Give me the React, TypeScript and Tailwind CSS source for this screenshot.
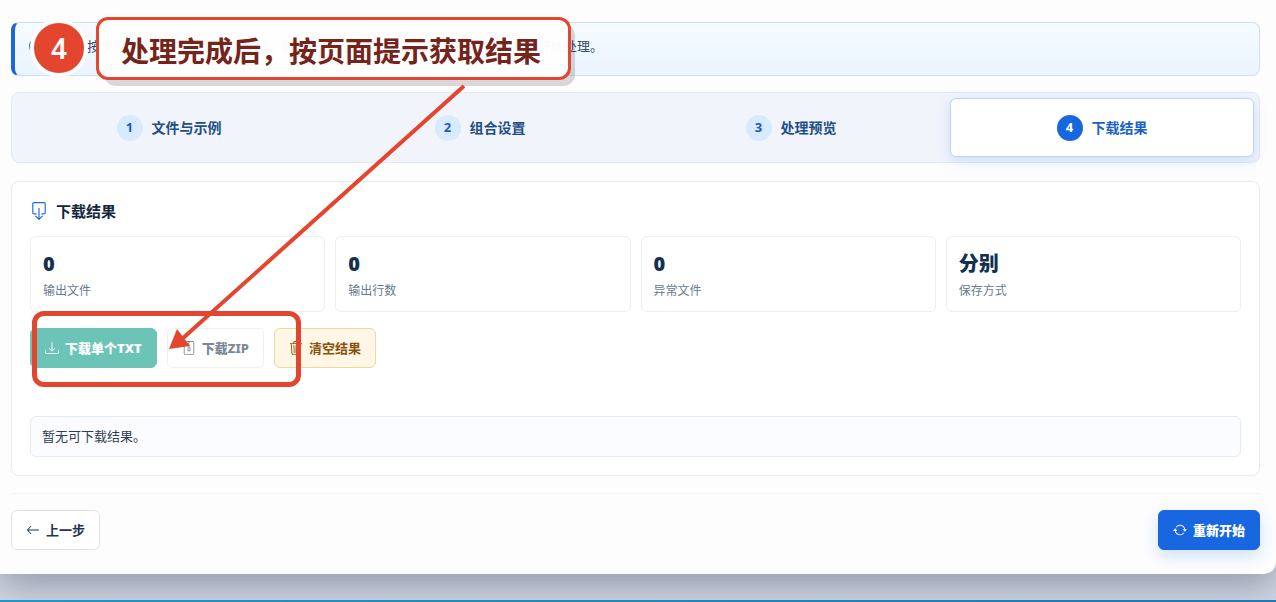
import type { ReactNode } from 'react';
import { BsArrowLeft, BsArrowRepeat, BsBoxArrowDown, BsDownload, BsFileZip, BsInfoCircle, BsTrash3 } from 'react-icons/bs';
import clsx from 'clsx';

const steps = ['文件与示例', '组合设置', '处理预览', '下载结果'];
const currentStep = 3;

const stats = [
    { value: '0', label: '输出文件' },
    { value: '0', label: '输出行数' },
    { value: '0', label: '异常文件' },
    { value: '分别', label: '保存方式' },
];

function ActionButton({ icon, children, className }: { icon: ReactNode; children: ReactNode; className: string }) {
    return (
        <button
            type="button"
            className={clsx('flex h-10 items-center gap-1.5 rounded-md border px-3.5 text-[13px] leading-5', className)}
        >
            {icon}
            {children}
        </button>
    );
}

// Guide layer drawn over the page: badge, caption, arrow and frame
function Guide() {
    return (
        <div className="pointer-events-none absolute inset-0">
            <div className="absolute left-[104px] top-6 h-[62px] w-[471px] rounded-xl bg-[#1e2332]/17" />
            <div className="absolute left-24 top-[17px] flex h-[63px] w-[475px] items-center rounded-xl border-3 border-[#e3452f] bg-white/97 pl-[22px] pt-1 text-[28px] font-bold text-[#74241a]">
                处理完成后，按页面提示获取结果
            </div>
            <div className="absolute left-[30px] top-[19px] flex size-[58px] items-center justify-center rounded-full border-4 border-white bg-[#e3452f] text-[28px] font-semibold text-white">
                4
            </div>
            <div className="absolute left-8 top-[311px] h-[76px] w-[269px] rounded-xl border-5 border-[#e3452f]" />
            <svg className="absolute left-0 top-0" width="600" height="400" viewBox="0 0 600 400">
                <path d="M464 86L182 339" stroke="#e3452f" strokeWidth="4" />
                <path d="M169 349L177 329L190 346Z" fill="#e3452f" />
            </svg>
        </div>
    );
}

export default function App() {
    return (
        <div className="relative flex min-h-screen flex-col justify-between overflow-hidden bg-[#d3d7e3] font-['Noto_Sans','Noto_Sans_CJK_SC',sans-serif] text-[#1b2d45]">
            <main className="rounded-br-xl bg-[#fdfdfe] pb-6 pl-[11px] pr-4 pt-[22px] shadow-[0_12px_36px_rgba(30,41,70,0.35)]">
                <div className="flex h-[54px] items-start gap-2.5 rounded-lg border border-l-4 border-[#cfe0f4] border-l-[#1c66d8] bg-linear-to-b from-[#f6fbff] to-[#eaf4fe] px-3.5 pt-[11px] text-[13px] leading-6 text-[#334a68]">
                    <BsInfoCircle className="mt-1 size-4 shrink-0 text-[#1c66d8]" />
                    <p className="ml-8 whitespace-nowrap">
                        按步骤上传文件与示例到处理器，再进行TXT组合设置，确认处理预览正确，再开始处理。
                    </p>
                </div>

                <nav className="mt-4 grid grid-cols-4 gap-[7px] rounded-lg border border-[#e2e9f3] bg-[#f1f4fb] p-[5px]">
                    {steps.map((step, i) => (
                        <button
                            key={step}
                            type="button"
                            className={clsx(
                                'flex h-[59px] items-center justify-center gap-[9px] rounded-md border text-sm font-bold',
                                i === currentStep
                                    ? 'border-[#b9d3f3] bg-white text-[#1b62c6] shadow-[0_4px_14px_rgba(28,102,216,0.16)]'
                                    : 'border-transparent text-[#1d4f86]'
                            )}
                        >
                            <span
                                className={clsx(
                                    'flex size-[26px] items-center justify-center rounded-full text-[13px]',
                                    i === currentStep ? 'bg-[#1866e0] text-white' : 'bg-[#d8eafd] text-[#1c5cb8]'
                                )}
                            >
                                {i + 1}
                            </span>
                            {step}
                        </button>
                    ))}
                </nav>

                <section className="mt-[18px] rounded-lg border border-[#e8ecf3] bg-white p-[18px]">
                    <h2 className="flex h-[22px] items-center gap-2 text-[15px] font-bold text-[#14263d]">
                        <BsBoxArrowDown className="size-[18px] text-[#1c66d8]" />
                        下载结果
                    </h2>
                    <dl className="mt-3.5 grid grid-cols-4 gap-2.5">
                        {stats.map((stat) => (
                            <div key={stat.label} className="flex h-[76px] flex-col-reverse justify-end rounded-md border border-[#ebeef3] px-3 pt-3">
                                <dt className="mt-0.5 text-xs leading-5 text-[#69788e]">{stat.label}</dt>
                                <dd className="text-xl leading-[30px] font-black text-[#14304f]">{stat.value}</dd>
                            </div>
                        ))}
                    </dl>
                    <div className="mt-4 flex gap-2.5">
                        <ActionButton icon={<BsDownload className="size-3.5" />} className="border-[#6bc4b6] bg-[#6bc4b6] font-black text-white">
                            下载单个TXT
                        </ActionButton>
                        <ActionButton icon={<BsFileZip className="size-3.5" />} className="border-[#edf0f4] bg-white font-extrabold text-[#7c8899]">
                            下载ZIP
                        </ActionButton>
                        <ActionButton icon={<BsTrash3 className="size-3.5" />} className="border-[#f0d9a0] bg-[#fff6e6] font-bold text-[#8a5209]">
                            清空结果
                        </ActionButton>
                    </div>
                    <p className="mt-12 rounded-md border border-[#e6ebf3] bg-[#fbfcff] px-[11px] py-[9px] text-[13px] leading-[21px] text-[#2f3d52]">
                        暂无可下载结果。
                    </p>
                </section>

                <footer className="mt-[17px] flex items-center justify-between border-t border-[#f3f5f9] pt-4">
                    <ActionButton icon={<BsArrowLeft className="size-3.5" />} className="border-[#dfe3e9] bg-white font-bold text-[#1d3550]">
                        上一步
                    </ActionButton>
                    <ActionButton
                        icon={<BsArrowRepeat className="size-3.5" />}
                        className="border-[#1866e0] bg-[#1866e0] font-black text-white shadow-[0_6px_16px_rgba(24,102,224,0.2)]"
                    >
                        重新开始
                    </ActionButton>
                </footer>
            </main>
            <div className="relative h-0.5 bg-linear-to-r from-[#1b97cf] to-[#1a7ab2]" />
            <Guide />
        </div>
    );
}
